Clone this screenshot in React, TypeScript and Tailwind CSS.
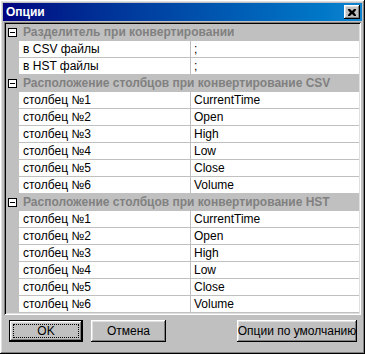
import React from 'react';

type Row = { name: string; value: string };
type Section = { title: string; rows: Row[] };

const cols = (): Row[] => [
  { name: 'столбец №1', value: 'CurrentTime' },
  { name: 'столбец №2', value: 'Open' },
  { name: 'столбец №3', value: 'High' },
  { name: 'столбец №4', value: 'Low' },
  { name: 'столбец №5', value: 'Close' },
  { name: 'столбец №6', value: 'Volume' },
];

const sections: Section[] = [
  {
    title: 'Разделитель при конвертировании',
    rows: [
      { name: 'в CSV файлы', value: ';' },
      { name: 'в HST файлы', value: ';' },
    ],
  },
  { title: 'Расположение столбцов при конвертирование CSV', rows: cols() },
  { title: 'Расположение столбцов при конвертирование HST', rows: cols() },
];

const raised =
  'shadow-[inset_-1px_-1px_#000,inset_1px_1px_#fff,inset_-2px_-2px_#808080,inset_2px_2px_#dfdfdf]';

function Button({ label, width, isDefault }: { label: string; width: string; isDefault?: boolean }) {
  return (
    <button
      type="button"
      className={`${width} h-[22px] bg-[#c0c0c0] text-[12px] text-black flex items-center justify-center ${
        isDefault
          ? 'shadow-[inset_0_0_0_1px_#000,inset_-2px_-2px_#000,inset_2px_2px_#fff,inset_-3px_-3px_#808080,inset_3px_3px_#dfdfdf]'
          : raised
      }`}
    >
      {isDefault ? (
        <span className="border border-dotted border-black w-[calc(100%-8px)] h-[14px] flex items-center justify-center">
          {label}
        </span>
      ) : (
        label
      )}
    </button>
  );
}

function MinusBox() {
  return (
    <div className="w-[9px] h-[9px] border border-black bg-white flex items-center justify-center">
      <div className="w-[5px] h-px bg-black" />
    </div>
  );
}

export default function App() {
  return (
    <div
      className={`w-[365px] h-[354px] bg-[#c0c0c0] p-[3px] flex flex-col ${raised}`}
      style={{ fontFamily: '"Liberation Sans", Arial, sans-serif' }}
    >
      {/* Title bar */}
      <div className="h-[18px] bg-gradient-to-r from-[#000080] to-[#1084d0] flex items-center justify-between pl-[3px] pr-[2px]">
        <span className="text-white font-bold text-[12px] leading-none">Опции</span>
        <button
          type="button"
          className={`w-[16px] h-[14px] bg-[#c0c0c0] flex items-center justify-center ${raised}`}
        >
          <svg width="8" height="7" viewBox="0 0 8 7">
            <path d="M0 0h2l2 2 2-2h2v1L6 3.5 8 6v1H6L4 5 2 7H0V6l2-2.5L0 1z" fill="#000" />
          </svg>
        </button>
      </div>

      {/* Property grid */}
      <div className="mt-[1px] mx-[1px] h-[293px] shadow-[inset_1px_1px_#808080,inset_-1px_-1px_#fff,inset_2px_2px_#000,inset_-2px_-2px_#dfdfdf] p-[2px] overflow-hidden">
        <div className="flex flex-col text-[12px] text-black">
          {sections.map(s => (
            <React.Fragment key={s.title}>
              <div className="h-[17px] flex items-center bg-[#c0c0c0] border-b border-[#c0c0c0]">
                <div className="w-[13px] flex justify-center">
                  <MinusBox />
                </div>
                <span className="pl-[4px] font-bold text-[#808080] whitespace-nowrap">{s.title}</span>
              </div>
              {s.rows.map(r => (
                <div key={s.title + r.name} className="h-[17px] flex">
                  <div className="w-[13px] bg-[#c0c0c0]" />
                  <div className="w-[172px] bg-white border-b border-r border-[#c0c0c0] pl-[4px] flex items-center">
                    {r.name}
                  </div>
                  <div className="flex-1 bg-white border-b border-[#c0c0c0] pl-[3px] flex items-center">
                    {r.value}
                  </div>
                </div>
              ))}
            </React.Fragment>
          ))}
        </div>
      </div>

      {/* Buttons */}
      <div className="flex mt-[5px] pl-[6px]">
        <Button label="OK" width="w-[74px]" isDefault />
        <div className="w-[8px]" />
        <Button label="Отмена" width="w-[75px]" />
        <div className="flex-1" />
        <Button label="Опции по умолчанию" width="w-[120px]" />
        <div className="w-[5px]" />
      </div>
    </div>
  );
}
